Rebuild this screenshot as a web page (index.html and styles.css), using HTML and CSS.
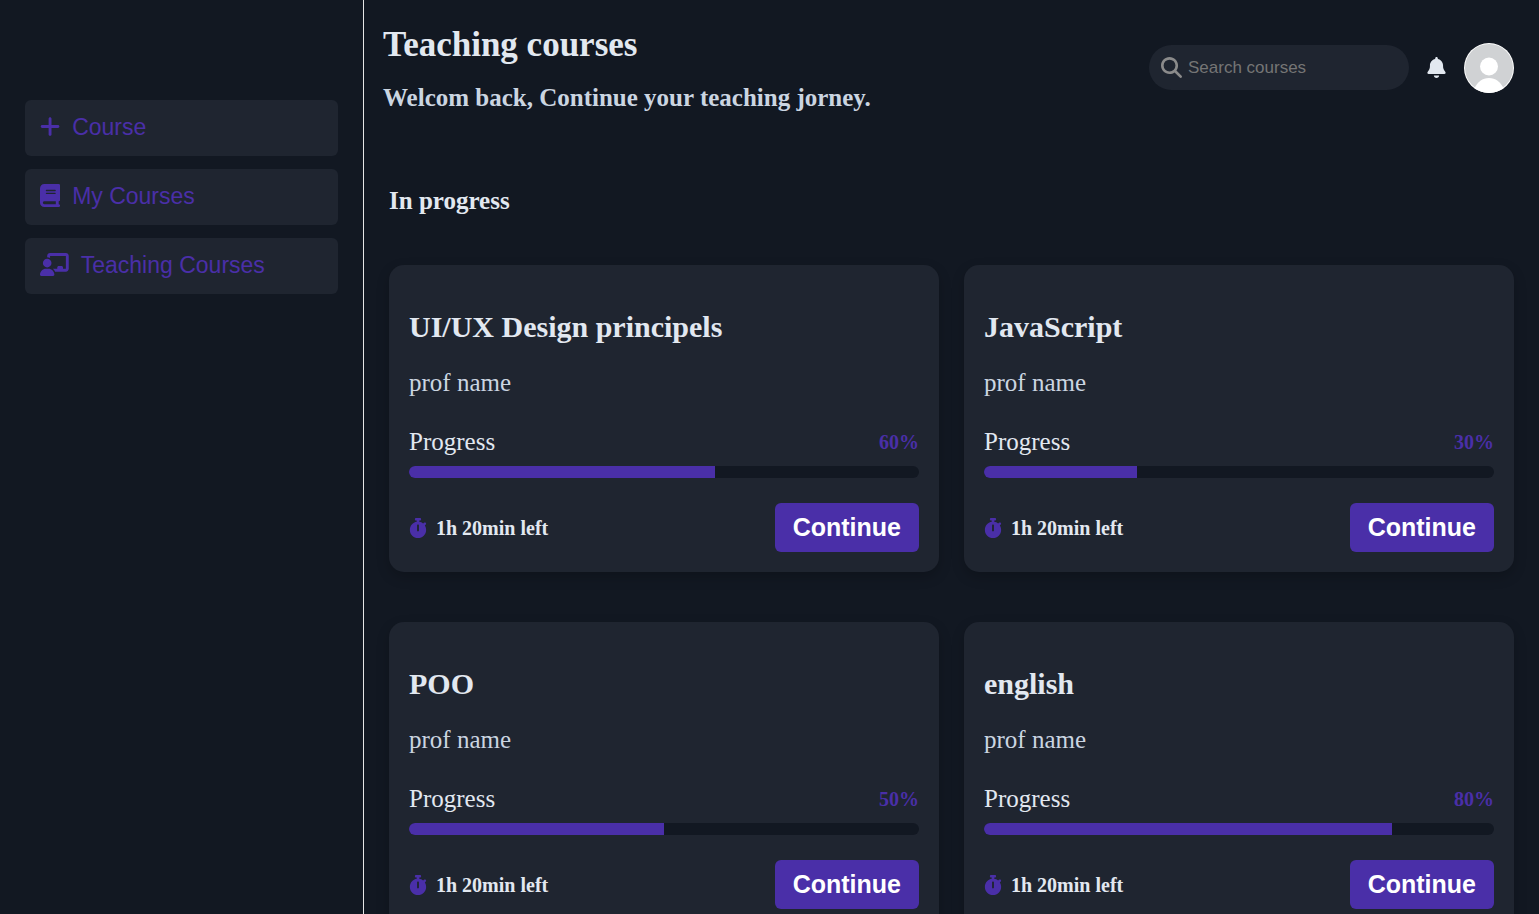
FILE: index.html
```html
<!DOCTYPE html>
<html lang="en">
<head>
<meta charset="utf-8">
<title>Teaching courses</title>
<link rel="stylesheet" href="styles.css">
</head>
<body>
<svg class="sprite" aria-hidden="true">
  <symbol id="stopwatch" viewBox="0 0 448 512"><path d="M176 0c-17.7 0-32 14.3-32 32s14.3 32 32 32h16V98.4C92.3 113.8 16 200 16 304c0 114.9 93.1 208 208 208s208-93.1 208-208c0-41.800-12.300-80.700-33.500-113.200l24.100-24.100c12.500-12.500 12.500-32.800 0-45.300s-32.800-12.500-45.300 0L355.700 143c-28.100-23-62.200-38.800-99.700-44.600V64h16c17.700 0 32-14.300 32-32s-14.300-32-32-32H224 176zm72 192V320c0 13.300-10.700 24-24 24s-24-10.700-24-24V192c0-13.300 10.700-24 24-24s24 10.700 24 24z"/></symbol>
</svg>
<div class="layout">
  <nav class="sidebar" aria-label="Courses">
    <a class="nav-link" href="#course">
      <svg class="nav-icon" viewBox="0 0 448 512" aria-hidden="true"><path d="M256 80c0-17.700-14.300-32-32-32s-32 14.300-32 32V224H48c-17.700 0-32 14.300-32 32s14.300 32 32 32H192V432c0 17.700 14.300 32 32 32s32-14.300 32-32V288H400c17.700 0 32-14.300 32-32s-14.300-32-32-32H256V80z"/></svg>
      <span>Course</span>
    </a>
    <a class="nav-link" href="#my-courses">
      <svg class="nav-icon" viewBox="0 0 448 512" aria-hidden="true"><path d="M96 0C43 0 0 43 0 96V416c0 53 43 96 96 96H384h32c17.700 0 32-14.300 32-32s-14.300-32-32-32V384c17.700 0 32-14.300 32-32V32c0-17.700-14.300-32-32-32H384 96zm0 384H352v64H96c-17.700 0-32-14.300-32-32s14.300-32 32-32zm32-240c0-8.800 7.200-16 16-16H336c8.800 0 16 7.200 16 16s-7.200 16-16 16H144c-8.800 0-16-7.200-16-16zm16 48H336c8.800 0 16 7.200 16 16s-7.200 16-16 16H144c-8.800 0-16-7.200-16-16s7.200-16 16-16z"/></svg>
      <span>My Courses</span>
    </a>
    <a class="nav-link" href="#teaching">
      <svg class="nav-icon" viewBox="0 0 640 512" aria-hidden="true"><path d="M160 64c0-35.300 28.700-64 64-64H576c35.300 0 64 28.700 64 64V352c0 35.300-28.700 64-64 64H336.800c-11.800-25.500-29.900-47.500-52.400-64H384V320c0-17.700 14.300-32 32-32h64c17.700 0 32 14.300 32 32v32h64V64L224 64v49.100C205.200 102.200 183.300 96 160 96V64zm0 64a96 96 0 1 1 0 192 96 96 0 1 1 0-192zM133.300 352h53.300C260.300 352 320 411.700 320 485.300c0 14.700-11.900 26.700-26.700 26.700H26.700C11.900 512 0 500.100 0 485.300C0 411.700 59.700 352 133.300 352z"/></svg>
      <span>Teaching Courses</span>
    </a>
  </nav>
  <main class="main">
    <header class="header">
      <div class="heading">
        <h1 class="title">Teaching courses</h1>
        <h2 class="subtitle">Welcom back, Continue your teaching jorney.</h2>
      </div>
      <div class="tools">
        <label class="search">
          <svg class="search-icon" viewBox="0 0 512 512" aria-hidden="true"><path d="M416 208c0 45.900-14.900 88.300-40 122.700L502.600 457.400c12.500 12.500 12.500 32.800 0 45.300s-32.800 12.500-45.300 0L330.700 376c-34.400 25.200-76.800 40-122.700 40C93.100 416 0 322.900 0 208S93.100 0 208 0S416 93.100 416 208zM208 352a144 144 0 1 0 0-288 144 144 0 1 0 0 288z"/></svg>
          <input class="search-input" type="search" placeholder="Search courses" aria-label="Search courses">
        </label>
        <button class="bell" type="button" aria-label="Notifications">
          <svg class="bell-icon" viewBox="0 0 448 512" aria-hidden="true"><path d="M224 0c-17.700 0-32 14.300-32 32V51.200C119 66 64 130.600 64 208v18.800c0 47-17.300 92.400-48.500 127.600l-7.400 8.300c-8.400 9.400-10.400 22.900-5.300 34.400S19.400 416 32 416H416c12.600 0 24-7.400 29.200-18.900s3.100-25-5.300-34.400l-7.400-8.300C401.300 319.200 384 273.900 384 226.800V208c0-77.400-55-142-128-156.800V32c0-17.700-14.300-32-32-32zm45.300 493.300c12-12 18.700-28.300 18.700-45.300H224 160c0 17 6.700 33.300 18.700 45.300s28.300 18.700 45.300 18.700s33.300-6.700 45.300-18.700z"/></svg>
        </button>
        <a class="avatar" href="#profile" aria-label="Profile">
          <svg class="avatar-image" viewBox="0 0 50 50" aria-hidden="true"><circle cx="25" cy="25" r="25" fill="#fff"/><circle cx="25" cy="25" r="24" fill="#d0d2d4"/><circle cx="25" cy="23.500" r="9" fill="#fff"/><path d="M10.500 45.300C13.500 39 18.500 35 25 35s11.500 4 14.500 10.300a25 25 0 0 1-29 0z" fill="#fff"/></svg>
        </a>
      </div>
    </header>
    <section class="courses" aria-labelledby="in-progress">
      <h3 class="section-title" id="in-progress">In progress</h3>
      <div class="grid">
        <article class="card">
          <h2 class="card-title">UI/UX Design principels</h2>
          <p class="prof">prof name</p>
          <div class="progress-row"><span>Progress</span><span class="percent">60%</span></div>
          <div class="bar"><div class="fill" style="width:60%"></div></div>
          <div class="card-foot"><span class="time"><svg class="time-icon" aria-hidden="true"><use href="#stopwatch"/></svg>1h 20min left</span><button class="continue" type="button">Continue</button></div>
        </article>
        <article class="card">
          <h2 class="card-title">JavaScript</h2>
          <p class="prof">prof name</p>
          <div class="progress-row"><span>Progress</span><span class="percent">30%</span></div>
          <div class="bar"><div class="fill" style="width:30%"></div></div>
          <div class="card-foot"><span class="time"><svg class="time-icon" aria-hidden="true"><use href="#stopwatch"/></svg>1h 20min left</span><button class="continue" type="button">Continue</button></div>
        </article>
        <article class="card">
          <h2 class="card-title">POO</h2>
          <p class="prof">prof name</p>
          <div class="progress-row"><span>Progress</span><span class="percent">50%</span></div>
          <div class="bar"><div class="fill" style="width:50%"></div></div>
          <div class="card-foot"><span class="time"><svg class="time-icon" aria-hidden="true"><use href="#stopwatch"/></svg>1h 20min left</span><button class="continue" type="button">Continue</button></div>
        </article>
        <article class="card">
          <h2 class="card-title">english</h2>
          <p class="prof">prof name</p>
          <div class="progress-row"><span>Progress</span><span class="percent">80%</span></div>
          <div class="bar"><div class="fill" style="width:80%"></div></div>
          <div class="card-foot"><span class="time"><svg class="time-icon" aria-hidden="true"><use href="#stopwatch"/></svg>1h 20min left</span><button class="continue" type="button">Continue</button></div>
        </article>
      </div>
    </section>
  </main>
</div>
</body>
</html>
```
FILE: styles.css
```css
:root {
  --bg: #121822;
  --card: #1f2530;
  --purple: #4a2fa8;
  --text: #e2e8f0;
  --muted: #cbd5e1;
}

* {
  box-sizing: border-box;
}

body {
  margin: 0;
  background: var(--bg);
  color: var(--text);
  font-family: "Liberation Serif", "Times New Roman", serif;
  font-size: 25px;
  line-height: 28px;
}

h1, h2, h3, p {
  margin: 0;
}

svg {
  display: block;
  flex: none;
  fill: currentColor;
}

.sprite {
  display: none;
}

/* Frame: the sidebar stays put while the course list scrolls */
.layout {
  display: flex;
  height: 100vh;
}

.sidebar {
  flex: none;
  display: flex;
  flex-direction: column;
  gap: 13px;
  width: 364px;
  padding: 100px 25px 25px;
  border-right: 1px solid #e5e5e5;
}

.nav-link {
  display: flex;
  align-items: center;
  gap: 12px;
  height: 56px;
  padding: 0 15px 3px;
  border-radius: 6px;
  background: var(--card);
  color: var(--purple);
  font-family: "Liberation Sans", Arial, sans-serif;
  font-size: 23px;
  text-decoration: none;
}

.nav-icon {
  height: 23px;
}

.main {
  flex: 1;
  min-width: 0;
  padding: 25px 25px 0;
  overflow-y: auto;
  scrollbar-width: none;
}

.header {
  display: flex;
  align-items: center;
  justify-content: space-between;
  margin-left: -6px;
}

.title {
  margin-bottom: 19px;
  font-size: 35px;
  line-height: 40px;
}

.subtitle {
  color: var(--muted);
  font-size: 25px;
}

.tools {
  display: flex;
  align-items: center;
  gap: 18px;
  padding-bottom: 2px;
}

.search {
  display: flex;
  align-items: center;
  gap: 6px;
  width: 260px;
  height: 45px;
  padding: 0 12px;
  border-radius: 23px;
  background: var(--card);
  color: #8b8b8b;
}

.search-icon {
  width: 21px;
  height: 21px;
}

.search-input {
  flex: 1;
  min-width: 0;
  padding: 0;
  border: 0;
  outline: 0;
  background: none;
  color: var(--text);
  font: 17px "Liberation Sans", Arial, sans-serif;
}

.search-input::placeholder {
  color: #757575;
}

.bell {
  padding: 0;
  border: 0;
  background: none;
  color: var(--text);
}

.bell-icon {
  width: 19px;
  height: 21px;
}

.avatar-image {
  width: 50px;
  height: 50px;
}

.section-title {
  margin: 75px 0 50px;
  font-size: 25px;
}

.grid {
  display: grid;
  grid-template-columns: repeat(2, minmax(0, 1fr));
  gap: 50px 25px;
  padding-bottom: 50px;
}

.card {
  padding: 45px 20px 20px;
  border-radius: 15px;
  background: var(--card);
  box-shadow: 0 5px 13px rgba(0, 0, 0, 0.2);
}

.card-title {
  font-size: 30px;
  line-height: 34px;
}

.prof {
  margin: 25px 0 31px;
  color: var(--muted);
}

.progress-row,
.card-foot {
  display: flex;
  align-items: center;
  justify-content: space-between;
}

.percent {
  color: var(--purple);
  font-size: 20px;
  font-weight: bold;
}

.bar {
  height: 12px;
  margin: 10px 0 25px;
  overflow: hidden;
  border-radius: 6px;
  background: var(--bg);
}

.fill {
  height: 100%;
  background: var(--purple);
}

.time {
  display: flex;
  align-items: center;
  gap: 9px;
  font-size: 20px;
  font-weight: bold;
}

.time-icon {
  width: 18px;
  height: 20px;
  color: var(--purple);
}

.continue {
  padding: 10px 18px;
  border: 0;
  border-radius: 6px;
  background: var(--purple);
  color: #fff;
  font: bold 25px/29px "Liberation Sans", Arial, sans-serif;
}
```
